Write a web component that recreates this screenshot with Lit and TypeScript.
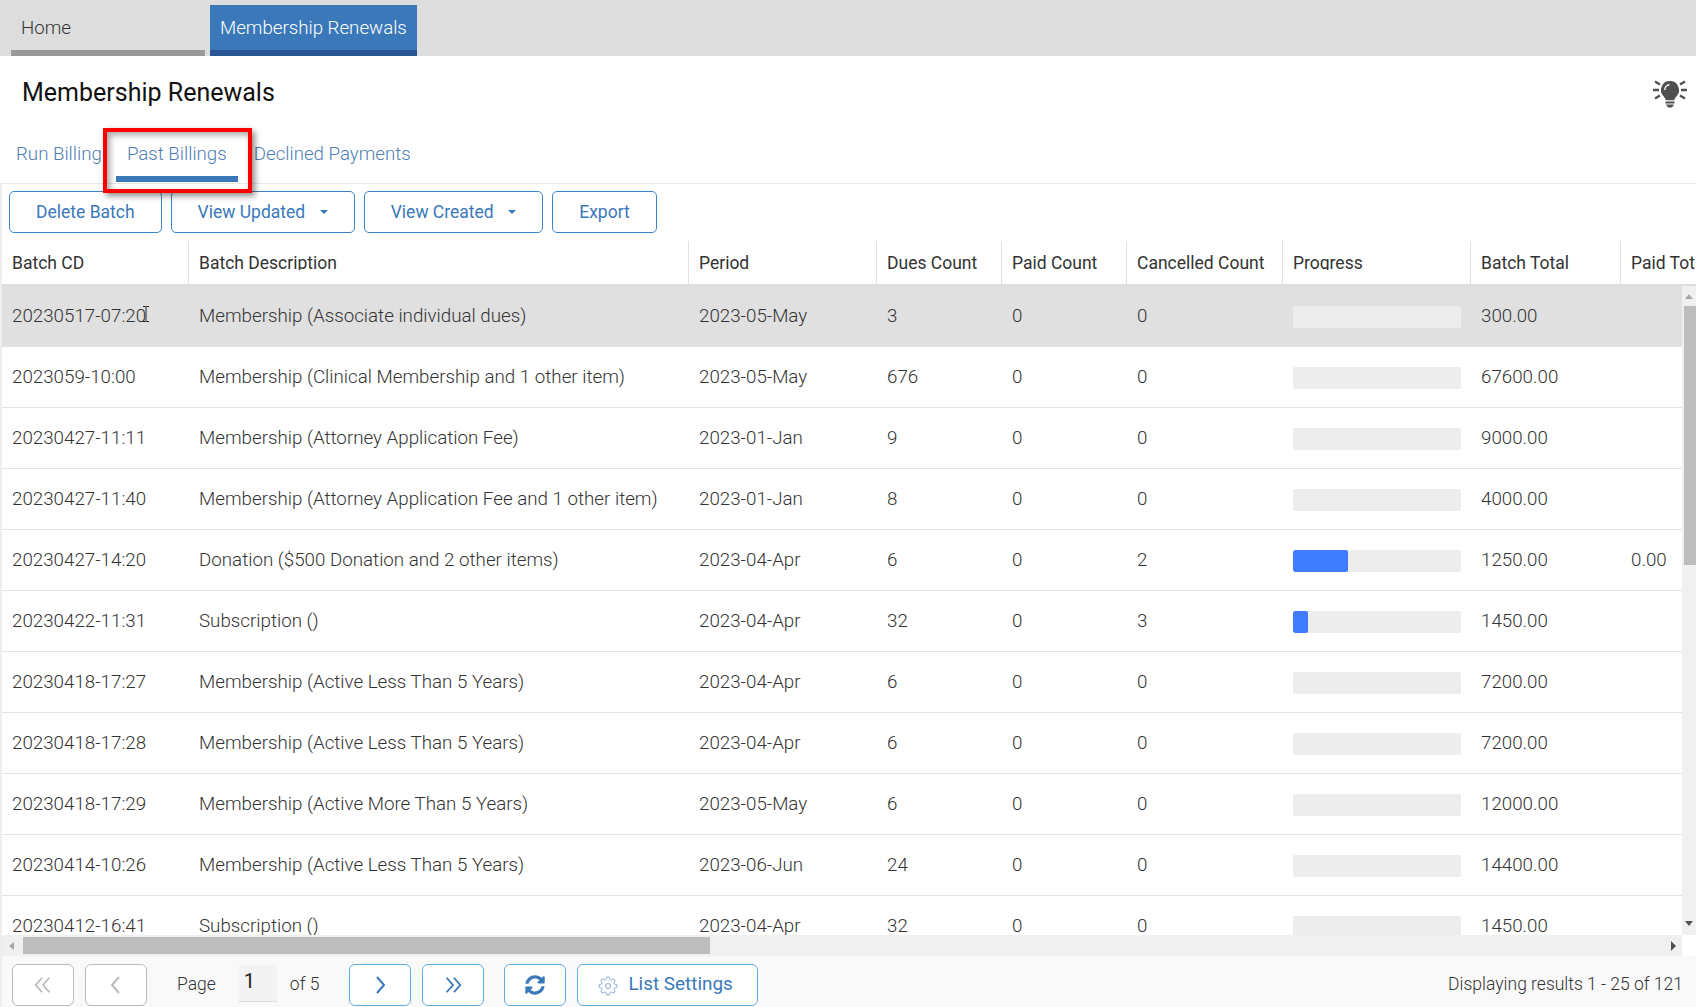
import { LitElement, html, css, svg } from "lit";
import { customElement } from "lit/decorators.js";

const COLS = ["Batch CD","Batch Description","Period","Dues Count","Paid Count","Cancelled Count","Progress","Batch Total","Paid Total"];
type Row = [string,string,string,string,string,string,number,string,string];
const ROWS: Row[] = [
 ["20230517-07:20","Membership (Associate individual dues)","2023-05-May","3","0","0",0,"300.00",""],
 ["2023059-10:00","Membership (Clinical Membership and 1 other item)","2023-05-May","676","0","0",0,"67600.00",""],
 ["20230427-11:11","Membership (Attorney Application Fee)","2023-01-Jan","9","0","0",0,"9000.00",""],
 ["20230427-11:40","Membership (Attorney Application Fee and 1 other item)","2023-01-Jan","8","0","0",0,"4000.00",""],
 ["20230427-14:20","Donation ($500 Donation and 2 other items)","2023-04-Apr","6","0","2",55,"1250.00","0.00"],
 ["20230422-11:31","Subscription ()","2023-04-Apr","32","0","3",15,"1450.00",""],
 ["20230418-17:27","Membership (Active Less Than 5 Years)","2023-04-Apr","6","0","0",0,"7200.00",""],
 ["20230418-17:28","Membership (Active Less Than 5 Years)","2023-04-Apr","6","0","0",0,"7200.00",""],
 ["20230418-17:29","Membership (Active More Than 5 Years)","2023-05-May","6","0","0",0,"12000.00",""],
 ["20230414-10:26","Membership (Active Less Than 5 Years)","2023-06-Jun","24","0","0",0,"14400.00",""],
 ["20230412-16:41","Subscription ()","2023-04-Apr","32","0","0",0,"1450.00",""],
];

const chevL = svg`<path d="M12 3 5 11l7 8"/>`;
const chevR = svg`<path d="M6 3l7 8-7 8"/>`;
const dblL = svg`<path d="M10 3 3 11l7 8M18 3l-7 8 7 8"/>`;
const dblR = svg`<path d="M4 3l7 8-7 8M12 3l7 8-7 8"/>`;

@customElement("app-root")
export class AppRoot extends LitElement {
  static styles = css`
    :host { display:block; width:1696px; height:1007px; overflow:hidden; background:#fff; font-family:Roboto,"Liberation Sans",sans-serif; color:#444; font-size:18px; }
    .topbar { height:56px; background:#ddd; display:flex; align-items:flex-end; box-sizing:border-box; padding-left:11px; gap:5px; }
    .mtab { box-sizing:border-box; height:51px; display:flex; align-items:center; padding:0 10px; font-weight:300; font-size:18.7px; border-bottom:6px solid #999; color:#333; }
    .mtab.home { width:194px; }
    .mtab.on { background:#3a78b9; color:#fff; border-bottom-color:#2a5595; }
    .title { height:72px; display:flex; align-items:center; justify-content:space-between; padding:0 9px 0 22px; box-sizing:border-box; }
    h1 { margin:0; font-size:25px; font-weight:400; color:#111; }
    .bulb { width:34px; height:28px; display:block; margin-top:3px; }
    .tabs { height:55px; display:flex; padding-left:5px; gap:3px; box-sizing:border-box; }
    .tab { position:relative; box-sizing:border-box; height:54px; padding:15px 11px 0; font-size:18.7px; font-weight:300; color:#4f7db5; }
    .tab.on { border-bottom:6px solid #3a78b9; }
    .tab.third { margin-left:2px; }
    .mark { position:absolute; left:-13px; right:-14px; top:0; height:65px; box-sizing:border-box; border:4px solid #f00; box-shadow:3px 3px 6px rgba(0,0,0,.45), inset 3px 3px 6px rgba(0,0,0,.35); pointer-events:none; z-index:3; }
    .panel { border-top:1px solid #e8e8e8; border-left:2px solid #eee; height:824px; display:flex; flex-direction:column; box-sizing:border-box; }
    .toolbar { display:flex; gap:9px; padding:7px 7px 0; height:57px; box-sizing:border-box; }
    .btn { box-sizing:border-box; height:42px; border:1px solid #3a86c8; border-radius:5px; background:#fff; color:#3a78b9; padding:0 26px 1px; display:flex; align-items:center; font-size:17.5px; font-weight:400; }
    .caret { width:0; height:0; border-left:4.5px solid transparent; border-right:4.5px solid transparent; border-top:4.5px solid #3a78b9; margin-left:14.5px; }
    .row,.head { display:grid; grid-template-columns:186px 500px 188px 125px 125px 156px 188px 150px 200px; }
    .headwrap { overflow:hidden; height:45px; border-bottom:2px solid #ddd; box-sizing:border-box; }
    .head { height:43px; }
    .hcell { padding:0 0 0 10px; border-left:1px solid #e0e0e0; font-size:17.5px; color:#333; font-weight:400; white-space:nowrap; }
    .hcell:first-child { border-left:0; }
    .hlabel { display:block; line-height:44px; height:44px; clip-path:inset(0 -40px 15px 0); }
    .bodywrap { display:flex; height:649px; }
    .rows { width:1680px; overflow:hidden; }
    .row { height:61px; box-sizing:border-box; border-bottom:1px solid #e4e4e4; align-items:center; position:relative; }
    .row.sel { background:#e0e0e0; }
    .cell { padding:0 0 0 11px; font-weight:300; font-size:18.76px; white-space:nowrap; color:#333; }
    .cell:first-child { padding-left:10px; }
    .bar { margin:2px 0 0 11px; width:168px; height:22px; border-radius:2px; background:#ededed; overflow:hidden; }
    .fill { height:100%; border-radius:2px; background:#3f7cff; }
    .ibeam { position:absolute; left:140px; top:20px; width:8px; height:16px; }
    .vbar { width:14px; background:#f0f0f0; display:flex; flex-direction:column; align-items:flex-end; position:relative; }
    .up { width:0; height:0; margin:8px 3px 0 0; border-left:4px solid transparent; border-right:4px solid transparent; border-bottom:5px solid #a6a6a6; }
    .vthumb { width:12px; height:259px; margin-top:7px; background:#bdbdbd; }
    .dn { width:0; height:0; margin:356px 3px 0 0; border-left:4px solid transparent; border-right:4px solid transparent; border-top:5px solid #505050; }
    .hrow { display:flex; height:21px; }
    .hbar { width:1680px; background:#f0f0f0; display:flex; align-items:center; padding:0 6px 0 7px; box-sizing:border-box; }
    .lt { width:0; height:0; border-top:4px solid transparent; border-bottom:4px solid transparent; border-right:5px solid #a6a6a6; }
    .hthumb { width:687px; height:17px; background:#bdbdbd; margin-left:9px; }
    .rt { width:0; height:0; margin-left:auto; border-top:5px solid transparent; border-bottom:5px solid transparent; border-left:5px solid #505050; }
    .footer { flex:1; background:#f9f9f9; display:flex; align-items:flex-start; padding:8px 13px 0 10px; box-sizing:border-box; min-height:0; font-weight:300; font-size:17.5px; color:#333; }
    .fb { box-sizing:border-box; width:62px; height:42px; border:1px solid #63ace0; border-radius:6px; background:#fff; display:flex; align-items:center; justify-content:center; margin-right:11px; color:#3a78b9; }
    .fb.off { border-color:#bbb; color:#bbb; }
    .fb svg { width:20px; height:22px; fill:none; stroke:currentColor; stroke-width:2; }
    .fb svg.sync { fill:currentColor; stroke:none; width:20px; height:20px; }
    .ftxt { line-height:40px; white-space:nowrap; }
    .page { margin-left:19px; }
    .inp { box-sizing:border-box; width:38px; height:37px; margin:1px 13px 0 23px; background:#f3f3f3; border-bottom:1px solid #ddd; padding:0 0 4px 5px; display:flex; align-items:center; font-size:20px; font-weight:400; color:#222; }
    .of { margin-right:30px; }
    .fb.gap { margin-left:9px; margin-right:11px; }
    .ls { width:181px; margin:0; color:#3a78b9; font-weight:400; font-size:18.9px; gap:10px; justify-content:flex-start; padding:0 0 4px 20px; }
    .ls svg { width:20px; height:20px; stroke-width:1; stroke:#6a92c4; margin-top:6px; flex:none; }
    .status { margin-left:auto; }
  `;

  render() {
    return html`
      <div class="topbar">
        <div class="mtab home">Home</div>
        <div class="mtab on">Membership Renewals</div>
      </div>
      <div class="title">
        <h1>Membership Renewals</h1>
        <svg class="bulb" viewBox="0 0 34 28">
          <path fill="#505050" d="M17 1a9 9 0 0 0-6.5 15.2c1.2 1.3 2 2.6 2.3 4h8.4c.3-1.4 1.1-2.7 2.3-4A9 9 0 0 0 17 1z"/>
          <path fill="none" stroke="#fff" stroke-width="1.4" d="M11.8 10a5.2 5.2 0 0 1 4.6-5.2"/>
          <rect fill="#505050" x="12.5" y="21.5" width="9" height="2"/>
          <path fill="#505050" d="M13 24.5h8l-2 3h-4z"/>
          <path fill="none" stroke="#505050" stroke-width="2.4" stroke-linecap="butt" d="M0 10h6M28 10h6M2 1.5l5 3M32 1.5l-5 3M2 18.5l5-3M32 18.5l-5-3"/>
        </svg>
      </div>
      <div class="tabs">
        <div class="tab">Run Billing</div>
        <div class="tab on">Past Billings<div class="mark"></div></div>
        <div class="tab third">Declined Payments</div>
      </div>
      <div class="panel">
        <div class="toolbar">
          <div class="btn">Delete Batch</div>
          <div class="btn">View Updated<span class="caret"></span></div>
          <div class="btn">View Created<span class="caret"></span></div>
          <div class="btn">Export</div>
        </div>
        <div class="headwrap"><div class="head">${COLS.map(c=>html`<div class="hcell"><span class="hlabel">${c}</span></div>`)}</div></div>
        <div class="bodywrap">
          <div class="rows">
            ${ROWS.map((r,i)=>html`<div class="row ${i===0?"sel":""}">
              ${r.slice(0,6).map(c=>html`<div class="cell">${c}</div>`)}
              <div class="bar"><div class="fill" style="width:${r[6]}px"></div></div>
              <div class="cell">${r[7]}</div>
              <div class="cell">${r[8]}</div>
              ${i===0?html`<svg class="ibeam" viewBox="0 0 8 16"><path fill="none" stroke="#222" stroke-width="1" d="M1 .5h2.5l.5.5.5-.5H7M4 1v14M1 15.5h2.5l.5-.5.5.5H7"/></svg>`:""}
            </div>`)}
          </div>
          <div class="vbar"><div class="up"></div><div class="vthumb"></div><div class="dn"></div></div>
        </div>
        <div class="hrow"><div class="hbar"><div class="lt"></div><div class="hthumb"></div><div class="rt"></div></div></div>
        <div class="footer">
          <div class="fb off"><svg viewBox="0 0 22 22">${dblL}</svg></div>
          <div class="fb off"><svg viewBox="0 0 18 22">${chevL}</svg></div>
          <div class="ftxt page">Page</div>
          <div class="inp">1</div>
          <div class="ftxt of">of 5</div>
          <div class="fb"><svg viewBox="0 0 18 22">${chevR}</svg></div>
          <div class="fb"><svg viewBox="0 0 22 22">${dblR}</svg></div>
          <div class="fb gap"><svg class="sync" viewBox="0 0 512 512"><path d="M370.72 133.28C339.458 104.008 298.888 87.962 255.848 88c-77.458.068-144.328 53.178-162.791 126.85-1.344 5.363-6.122 9.15-11.651 9.15H24.103c-7.498 0-13.194-6.807-11.807-14.176C33.933 94.924 134.813 8 256 8c66.448 0 126.791 26.136 171.315 68.685L463.03 40.97C478.149 25.851 504 36.559 504 57.941V192c0 13.255-10.745 24-24 24H345.941c-21.382 0-32.09-25.851-16.971-40.971l41.75-41.749zM32 296h134.059c21.382 0 32.09 25.851 16.971 40.971l-41.75 41.75c31.262 29.273 71.835 45.319 114.876 45.28 77.418-.07 144.315-53.144 162.787-126.849 1.344-5.363 6.122-9.15 11.651-9.15h57.304c7.498 0 13.194 6.807 11.807 14.176C478.067 417.076 377.187 504 256 504c-66.448 0-126.791-26.136-171.315-68.685L48.97 471.03C33.851 486.149 8 475.441 8 454.059V320c0-13.255 10.745-24 24-24z"/></svg></div>
          <div class="fb ls"><svg viewBox="0 0 24 24"><circle cx="12" cy="12" r="3"/><path d="M19.4 15a1.65 1.65 0 0 0 .33 1.82l.06.06a2 2 0 0 1 0 2.83 2 2 0 0 1-2.83 0l-.06-.06a1.65 1.65 0 0 0-1.82-.33 1.65 1.65 0 0 0-1 1.51V21a2 2 0 0 1-2 2 2 2 0 0 1-2-2v-.09A1.65 1.65 0 0 0 9 19.4a1.65 1.65 0 0 0-1.82.33l-.06.06a2 2 0 0 1-2.83 0 2 2 0 0 1 0-2.83l.06-.06a1.65 1.65 0 0 0 .33-1.82 1.65 1.65 0 0 0-1.51-1H3a2 2 0 0 1-2-2 2 2 0 0 1 2-2h.09A1.65 1.65 0 0 0 4.6 9a1.65 1.65 0 0 0-.33-1.82l-.06-.06a2 2 0 0 1 0-2.83 2 2 0 0 1 2.83 0l.06.06a1.65 1.65 0 0 0 1.82.33H9a1.65 1.65 0 0 0 1-1.51V3a2 2 0 0 1 2-2 2 2 0 0 1 2 2v.09a1.65 1.65 0 0 0 1 1.51 1.65 1.65 0 0 0 1.82-.33l.06-.06a2 2 0 0 1 2.83 0 2 2 0 0 1 0 2.83l-.06.06a1.65 1.65 0 0 0-.33 1.82V9a1.65 1.65 0 0 0 1.51 1H21a2 2 0 0 1 2 2 2 2 0 0 1-2 2h-.09a1.65 1.65 0 0 0-1.51 1z"/></svg>List Settings</div>
          <div class="ftxt status">Displaying results 1 - 25 of 121</div>
        </div>
      </div>
    `;
  }
}
